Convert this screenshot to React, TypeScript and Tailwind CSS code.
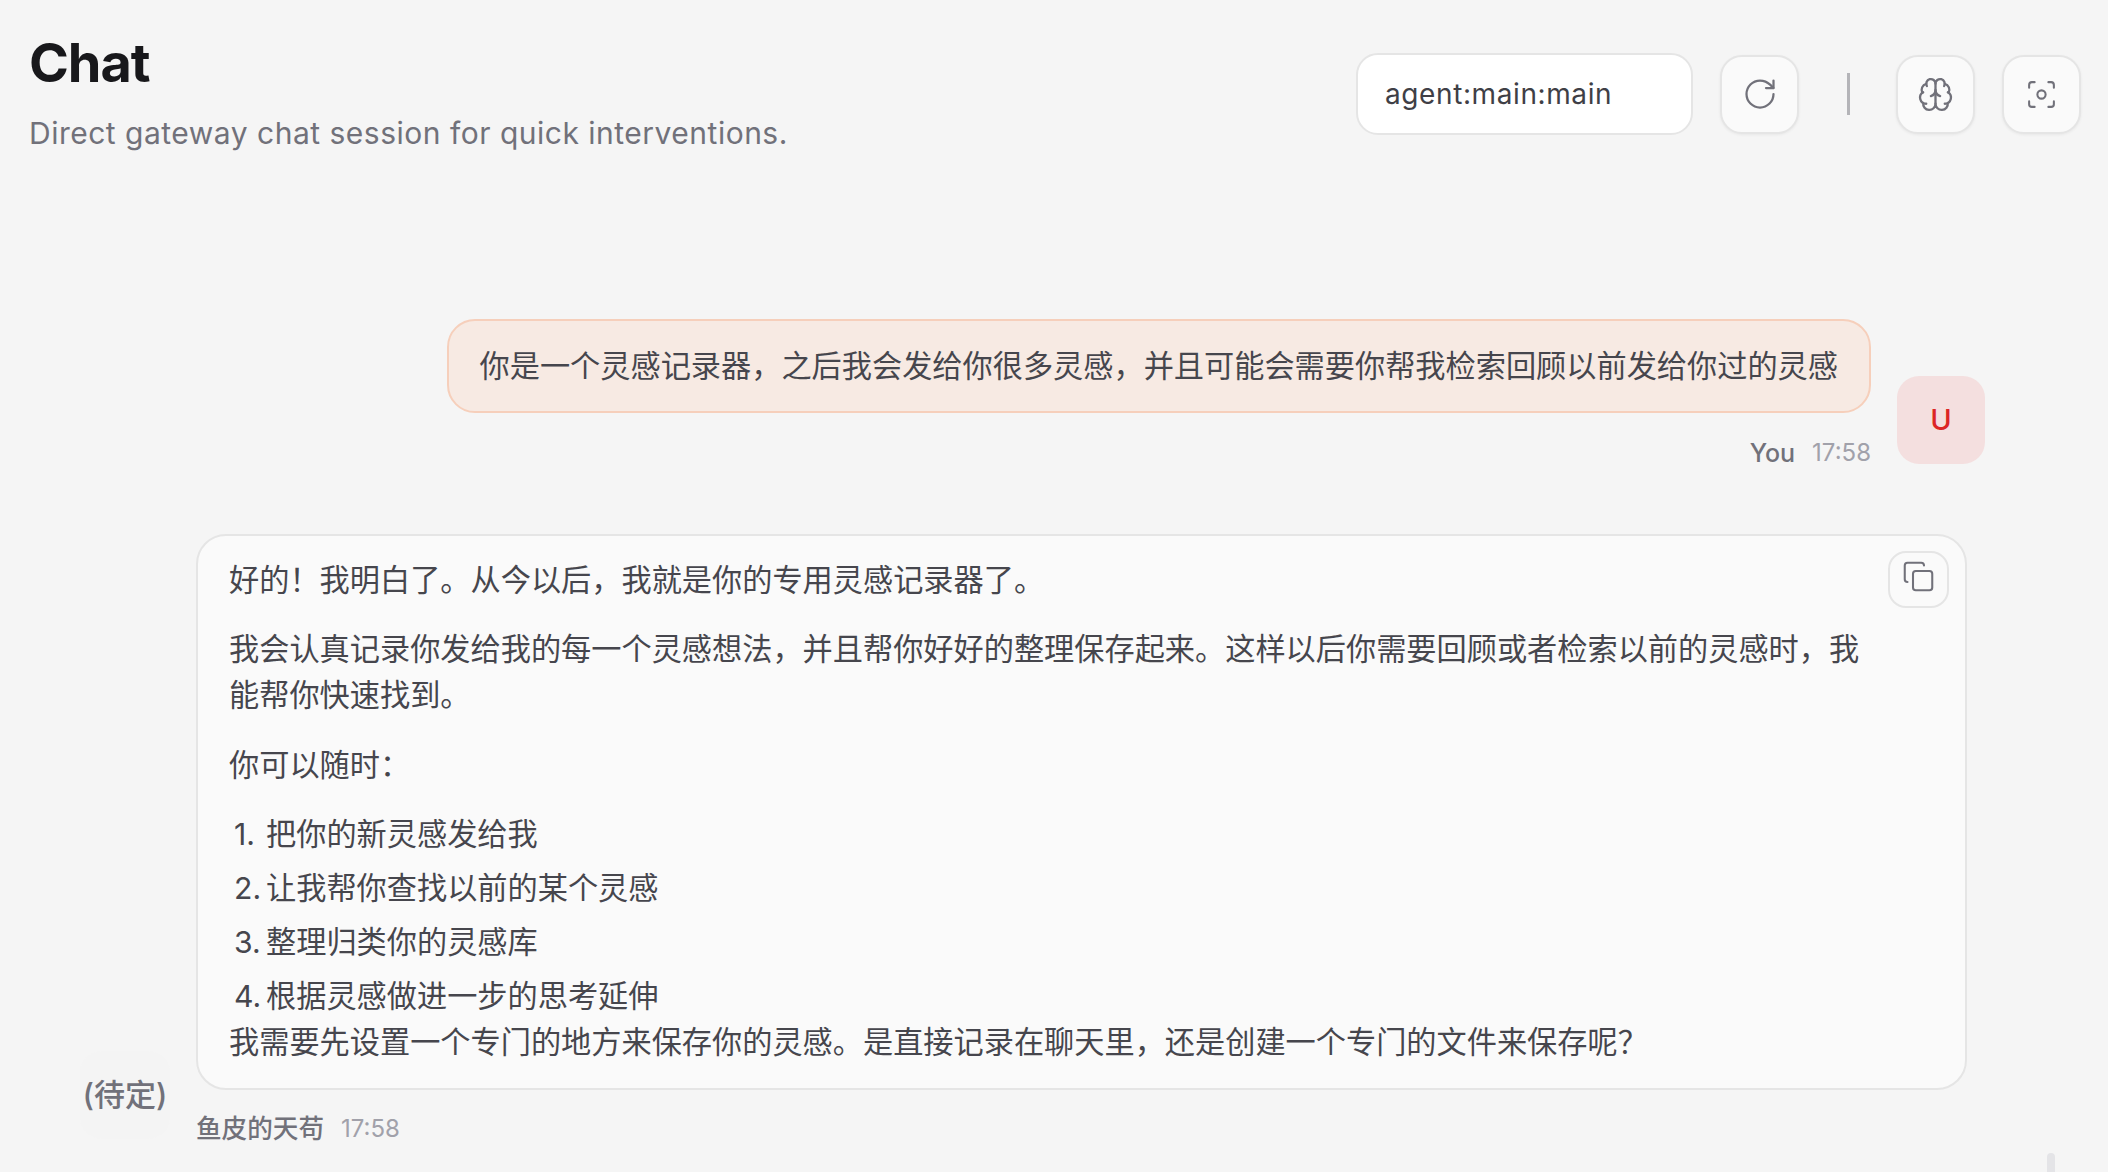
import React from "react";
import { RotateCw, Brain, Focus, Copy } from "lucide-react";

const cjk = "font-['Inter','Noto_Sans_CJK_SC',sans-serif]";

const iconBtn =
  "flex h-[79px] w-[79px] items-center justify-center rounded-[22px] border-2 border-[#e5e5e5] bg-[#fafafa] text-[#71717a] shadow-[0_1px_3px_rgba(0,0,0,0.06)]";

const steps = [
  "把你的新灵感发给我",
  "让我帮你查找以前的某个灵感",
  "整理归类你的灵感库",
  "根据灵感做进一步的思考延伸",
];

export default function App() {
  return (
    <div className={`relative h-[1172px] w-[2108px] overflow-hidden bg-[#f5f5f5] ${cjk}`}>
      {/* Page header */}
      <header className="flex items-start justify-between pl-[29px] pr-[27px] pt-[30px]">
        <div>
          <h1 className="text-[54px] font-bold leading-[66px] tracking-[-0.02em] text-[#18181b]">Chat</h1>
          <p className="mt-[19px] text-[30px] leading-[36px] tracking-[0.5px] text-[#71717a]">
            Direct gateway chat session for quick interventions.
          </p>
        </div>
        <div className="mt-[23px] flex items-center">
          <div className="flex h-[82px] w-[337px] items-center rounded-[22px] border-2 border-[#e5e5e5] bg-white pl-[27px] text-[28px] tracking-[0.6px] text-[#3f3f46]">
            agent:main:main
          </div>
          <button className={`${iconBtn} ml-[27px]`}>
            <RotateCw size={36} strokeWidth={1.5} />
          </button>
          <div className="ml-[48px] h-[42px] w-[3px] bg-[#b4b4b8]" />
          <button className={`${iconBtn} ml-[46px]`}>
            <Brain size={37} strokeWidth={1.5} />
          </button>
          <button className={`${iconBtn} ml-[27px]`}>
            <Focus size={33} strokeWidth={1.5} />
          </button>
        </div>
      </header>

      {/* Thread */}
      <main className="pt-[168px]">
        <div className="flex items-end justify-end gap-[26px] pr-[123px]">
          <div className="flex flex-col items-end">
            <div className="rounded-[28px] border-2 border-[#f6cfbb] bg-[#f7eae3] px-[31px] py-[22px] text-[30.2px] leading-[46px] text-[#46464d]">
              你是一个灵感记录器，之后我会发给你很多灵感，并且可能会需要你帮我检索回顾以前发给你过的灵感
            </div>
            <div className="mt-[29px] flex items-center gap-[17px] leading-[22px]">
              <span className="text-[25px] font-medium text-[#71717a]">You</span>
              <span className="text-[24px] text-[#a1a1aa]">17:58</span>
            </div>
          </div>
          <div className="flex h-[88px] w-[88px] shrink-0 items-center justify-center rounded-[22px] bg-[#f4dfdf] text-[29px] font-medium text-[#dc2626]">
            U
          </div>
        </div>

        <div className="mt-[70px] flex items-end gap-[26px] pl-[80px] pr-[141px]">
          <div className="mb-[4px] flex h-[88px] w-[90px] shrink-0 items-center justify-center rounded-[22px] bg-[#f4f4f4] text-[31px] font-medium text-[#71717a]">
            (待定)
          </div>
          <div className="min-w-0 flex-1">
            <div className="relative rounded-[30px] border-2 border-[#e5e5e5] bg-[#fafafa] pb-[23px] pl-[31px] pr-[91px] pt-[21px] text-[30.2px] leading-[46px] text-[#46464d]">
              <button className="absolute right-[16px] top-[15px] flex h-[57px] w-[61px] items-center justify-center rounded-[18px] border-2 border-[#e5e5e5] bg-[#fafafa] pb-[6px] text-[#71717a]">
                <Copy size={33} strokeWidth={1.5} />
              </button>
              <p>好的！我明白了。从今以后，我就是你的专用灵感记录器了。</p>
              <p className="mt-[23px]">
                我会认真记录你发给我的每一个灵感想法，并且帮你好好的整理保存起来。这样以后你需要回顾或者检索以前的灵感时，我能帮你快速找到。
              </p>
              <p className="mt-[24px]">你可以随时：</p>
              <ol className="mt-[23px] flex flex-col gap-[8px]">
                {steps.map((s, i) => (
                  <li key={s} className="flex pl-[5px]">
                    <span className="w-[32px] shrink-0">{i + 1}.</span>
                    <span>{s}</span>
                  </li>
                ))}
              </ol>
              <p>我需要先设置一个专门的地方来保存你的灵感。是直接记录在聊天里，还是创建一个专门的文件来保存呢？</p>
            </div>
            <div className="mt-[24px] flex items-center gap-[17px] leading-[29px]">
              <span className="text-[25.6px] font-medium text-[#71717a]">鱼皮的天苟</span>
              <span className="text-[24px] text-[#a1a1aa]">17:58</span>
            </div>
          </div>
        </div>
      </main>

      {/* Scrollbar thumb */}
      <div className="absolute left-[2047px] top-[1153px] h-[40px] w-[8px] rounded-t-[8px] bg-[#e4e4e7]" />
    </div>
  );
}
